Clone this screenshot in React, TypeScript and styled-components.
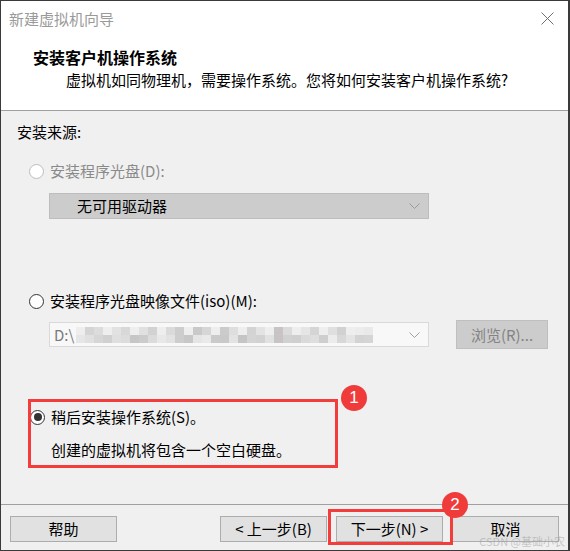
import styled, { createGlobalStyle } from "styled-components";

const GlobalStyle = createGlobalStyle`
  html, body {
    margin: 0;
    padding: 0;
    background: #3a3a3a;
  }
  body {
    font-family: "Noto Sans CJK SC", "Noto Sans", sans-serif;
  }
`;

const Window = styled.div`
  position: relative;
  width: 567px;
  height: 549px;
  margin: 1px 0 0 1px;
  display: flex;
  flex-direction: column;
  background: #f0f0f0;
  font-size: 15px;
  line-height: 20px;
  color: #000;
  overflow: hidden;
`;

const Header = styled.div`
  height: 109px;
  background: #fff;
  border-bottom: 1px solid #a0a0a0;
`;

const TitleBar = styled.div`
  height: 35px;
  display: flex;
  align-items: center;
  justify-content: space-between;
  padding: 0 14px 0 8px;
`;

const Title = styled.span`
  color: #9a9a9a;
`;

const Heading = styled.div`
  margin-top: 11px;
  padding-left: 32px;
  font-size: 16px;
  font-weight: bold;
`;

const Subtitle = styled.div`
  margin-top: 3px;
  padding-left: 65px;
`;

const Body = styled.div`
  flex: 1;
  display: flex;
  flex-direction: column;
  align-items: flex-start;
  padding: 11px 0 0 16px;
`;

const Row = styled.div<{ $top: number; $indent?: number }>`
  display: flex;
  align-items: center;
  margin-top: ${(p) => p.$top}px;
  margin-left: ${(p) => p.$indent ?? 0}px;
`;

const Radio = styled.span<{ $checked?: boolean; $disabled?: boolean }>`
  width: 15px;
  height: 15px;
  box-sizing: border-box;
  border-radius: 50%;
  border: 1px solid ${(p) => (p.$disabled ? "#bcbcbc" : "#333")};
  background: #fff;
  margin-right: 6px;
  display: flex;
  align-items: center;
  justify-content: center;
  &::after {
    content: "";
    display: ${(p) => (p.$checked ? "block" : "none")};
    width: 8px;
    height: 8px;
    border-radius: 50%;
    background: #333;
  }
`;

const Label = styled.span<{ $disabled?: boolean }>`
  color: ${(p) => (p.$disabled ? "#8a8a8a" : "#000")};
`;

const Combo = styled.div<{ $disabled?: boolean; $width: number; $height: number }>`
  box-sizing: border-box;
  width: ${(p) => p.$width}px;
  height: ${(p) => p.$height}px;
  display: flex;
  align-items: center;
  padding: 0 8px 0 ${(p) => (p.$disabled ? 27 : 4)}px;
  background: ${(p) => (p.$disabled ? "#cccccc" : "#f8f8f8")};
  border: 1px solid ${(p) => (p.$disabled ? "#bdbdbd" : "#d9d9d9")};
`;

const ComboText = styled.span<{ $muted?: boolean }>`
  flex: 1;
  display: flex;
  align-items: center;
  overflow: hidden;
  color: ${(p) => (p.$muted ? "#7a7a7a" : "#000")};
`;

const Mosaic = styled.span`
  display: flex;
  flex-direction: column;
  margin-left: 2px;
`;

const MosaicRow = styled.span`
  display: flex;
  height: 8px;
`;

const Block = styled.span<{ $shade: string }>`
  width: 9px;
  height: 8px;
  background: ${(p) => p.$shade};
`;

const BrowseButton = styled.div`
  box-sizing: border-box;
  width: 92px;
  height: 29px;
  margin-left: 27px;
  display: flex;
  align-items: center;
  justify-content: center;
  background: #cccccc;
  border: 1px solid #bfbfbf;
  color: #838383;
`;

const Highlight = styled.div`
  position: relative;
  width: 308px;
  margin-top: 58px;
  margin-left: 13px;
  &::after {
    content: "";
    position: absolute;
    top: -8px;
    left: -2px;
    right: 0;
    bottom: -8px;
    border: 3px solid #f33d3d;
  }
`;

const Badge = styled.span<{ $left: number; $top: number }>`
  position: absolute;
  left: ${(p) => p.$left}px;
  top: ${(p) => p.$top}px;
  width: 26px;
  height: 26px;
  border-radius: 50%;
  background: #f03b3b;
  color: #fff;
  font-family: "Liberation Sans", Arial, sans-serif;
  font-size: 17px;
  line-height: 26px;
  text-align: center;
  z-index: 2;
`;

const Desc = styled.div`
  margin-top: 13px;
  padding-left: 21px;
`;

const Footer = styled.div`
  height: 46px;
  box-sizing: border-box;
  border-top: 1px solid #a0a0a0;
  display: flex;
  align-items: flex-start;
  padding: 11px 9px 0 9px;
`;

const Button = styled.div`
  box-sizing: border-box;
  width: 107px;
  height: 26px;
  display: flex;
  align-items: center;
  justify-content: center;
  background: #e1e1e1;
  border: 1px solid #adadad;
`;

const ButtonGroup = styled.div`
  margin-left: auto;
  display: flex;
  gap: 9px;
`;

const Focused = styled.div`
  position: relative;
  &::after {
    content: "";
    position: absolute;
    top: -7px;
    left: -8px;
    right: -10px;
    bottom: -3px;
    border: 3px solid #f33d3d;
  }
`;

const Watermark = styled.span`
  position: absolute;
  right: 3px;
  bottom: 2px;
  font-size: 11px;
  line-height: 14px;
  color: rgba(160, 160, 160, 0.55);
  pointer-events: none;
`;

const Chevron = ({ color }: { color: string }) => (
  <svg width="11" height="6" viewBox="0 0 11 6">
    <polyline points="0.5,0.5 5.5,5.5 10.5,0.5" fill="none" stroke={color} strokeWidth="1" />
  </svg>
);

const CloseIcon = () => (
  <svg width="13" height="13" viewBox="0 0 13 13">
    <path d="M0.5 0.5 L12.5 12.5 M12.5 0.5 L0.5 12.5" stroke="#707070" strokeWidth="1" />
  </svg>
);

const shades = [
  "#e6e6e6", "#d4d4d4", "#dcdcdc", "#cfcfcf", "#e2e2e2", "#d8d8d8", "#cacaca", "#e0e0e0",
  "#d2d2d2", "#c6c6c6", "#dadada", "#cdcdcd", "#e4e4e4", "#c9c9c9", "#d6d6d6", "#e1e1e1",
  "#cbcbcb", "#dedede", "#c7c7c7", "#d3d3d3", "#e3e3e3", "#d0d0d0", "#c8c4c4", "#dbdbdb",
  "#cecece", "#e5e5e5", "#d5d5d5", "#c5c5c5", "#dfdfdf", "#d1d1d1", "#e8e8e8", "#ececec",
  "#e9e9e9",
];

const App = () => {
  return (
    <>
      <GlobalStyle />
      <Window>
        <Header>
          <TitleBar>
            <Title>新建虚拟机向导</Title>
            <CloseIcon />
          </TitleBar>
          <Heading>安装客户机操作系统</Heading>
          <Subtitle>虚拟机如同物理机，需要操作系统。您将如何安装客户机操作系统?</Subtitle>
        </Header>

        <Body>
          <span>安装来源:</span>

          <Row $top={19} $indent={12}>
            <Radio $disabled />
            <Label $disabled>安装程序光盘(D):</Label>
          </Row>
          <Row $top={12} $indent={32}>
            <Combo $disabled $width={380} $height={26}>
              <ComboText>无可用驱动器</ComboText>
              <Chevron color="#9a9a9a" />
            </Combo>
          </Row>

          <Row $top={72} $indent={12}>
            <Radio />
            <Label>安装程序光盘映像文件(iso)(M):</Label>
          </Row>
          <Row $top={9} $indent={32}>
            <Combo $width={380} $height={25}>
              <ComboText $muted>
                D:\
                <Mosaic>
                  <MosaicRow>
                    {shades.map((s, i) => (
                      <Block key={i} $shade={i % 3 === 0 ? "#eeeeee" : s} />
                    ))}
                  </MosaicRow>
                  <MosaicRow>
                    {shades.map((_, i) => (
                      <Block key={i} $shade={shades[(i * 7) % shades.length]} />
                    ))}
                  </MosaicRow>
                </Mosaic>
              </ComboText>
              <Chevron color="#a0a0a0" />
            </Combo>
            <BrowseButton>浏览(R)...</BrowseButton>
          </Row>

          <Highlight>
            <Badge $left={311} $top={-22}>1</Badge>
            <Row $top={0}>
              <Radio $checked />
              <Label>稍后安装操作系统(S)。</Label>
            </Row>
            <Desc>创建的虚拟机将包含一个空白硬盘。</Desc>
          </Highlight>
        </Body>

        <Footer>
          <Button>帮助</Button>
          <ButtonGroup>
            <Button>&lt; 上一步(B)</Button>
            <Focused>
              <Badge $left={106} $top={-24}>2</Badge>
              <Button>下一步(N) &gt;</Button>
            </Focused>
            <Button>取消</Button>
          </ButtonGroup>
        </Footer>

        <Watermark>CSDN @基础小农</Watermark>
      </Window>
    </>
  );
};

export default App;
